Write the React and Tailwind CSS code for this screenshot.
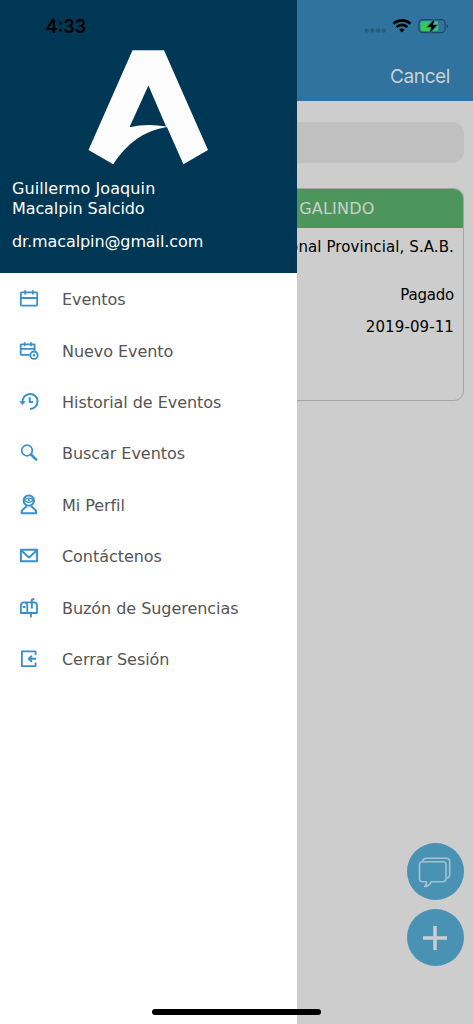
import React from "react";

function Icon({ children }) {
  return (
    <svg
      className="h-6 w-6 shrink-0"
      viewBox="0 0 24 24"
      fill="none"
      stroke="#3990ca"
      strokeWidth="1.8"
      strokeLinejoin="round"
    >
      {children}
    </svg>
  );
}

const items = [
  {
    label: "Eventos",
    icon: (
      <Icon>
        <rect x="3.8" y="5.4" width="16.4" height="13.2" rx="0.8" />
        <path d="M3.8 11h16.4M8.2 3.2v4.2M15.8 3.2v4.2" />
      </Icon>
    ),
  },
  {
    label: "Nuevo Evento",
    icon: (
      <Icon>
        <path d="M12.6 15.8H4.4a.7.7 0 0 1-.7-.7V6a.7.7 0 0 1 .7-.7h13.2V11.5M3.7 9.9h13.9M7.7 3.2v4M14 3.2v4" />
        <circle cx="17" cy="16.2" r="3.7" />
        <circle cx="17" cy="16.2" r="1.2" fill="#3990ca" stroke="none" />
      </Icon>
    ),
  },
  {
    label: "Historial de Eventos",
    icon: (
      <Icon>
        <path d="M5.6 12.2A7.5 7.5 0 1 1 13 18.9" strokeWidth="2" />
        <path d="M2.2 11.3h6.6l-3.3 3.8z" fill="#3990ca" stroke="none" />
        <path d="M12.7 7.2v4.8h3.4" strokeWidth="2" />
      </Icon>
    ),
  },
  {
    label: "Buscar Eventos",
    icon: (
      <Icon>
        <circle cx="10" cy="9.5" r="5.3" strokeWidth="1.7" />
        <path d="M14 13.5l5.2 5.1" strokeWidth="2.5" strokeLinecap="round" />
      </Icon>
    ),
  },
  {
    label: "Mi Perfil",
    icon: (
      <Icon>
        <circle cx="11.8" cy="7.6" r="5.2" strokeWidth="2" />
        <path d="M6.9 6.9q4.9-3.4 9.8 0M7.4 7.3q4.4 4 8.8 0" strokeWidth="1.2" />
        <circle cx="11.8" cy="7.1" r="1.1" fill="#3990ca" stroke="none" />
        <path d="M9.6 13.2L5.4 17q-.8.8-.8 2.1v1.2h14.6v-1.2q0-1.3-.8-2.1l-4.2-3.8" strokeWidth="2" />
      </Icon>
    ),
  },
  {
    label: "Contáctenos",
    icon: (
      <Icon>
        <rect x="3.9" y="5.8" width="16.2" height="11.5" strokeWidth="2" />
        <path d="M4.6 6.8L12 13.4l7.4-6.6" strokeWidth="2" />
      </Icon>
    ),
  },
  {
    label: "Buzón de Sugerencias",
    icon: (
      <Icon>
        <path d="M3.9 17V9.4a3 3 0 0 1 3-3h10.1a3 3 0 0 1 3 3V17zM10.3 17V9.4a3 3 0 0 0-3.1-3M5.8 11h2.7" />
        <path d="M14.8 12.4V4l2.4-1.3M13.9 17v4.2" strokeWidth="2" />
      </Icon>
    ),
  },
  {
    label: "Cerrar Sesión",
    icon: (
      <Icon>
        <path d="M18.6 8V4.3H4.9v14.8h13.7V15.5" />
        <path d="M18.9 11.8H11.9M14.9 8.8l-3.1 3 3.1 3" strokeWidth="2" />
      </Icon>
    ),
  },
];

function StatusIcons() {
  return (
    <svg className="h-[18px] w-[86px]" viewBox="0 0 86 18">
      <g fill="#255b80">
        <rect x="1.7" y="11.5" width="4" height="4" rx="1.3" />
        <rect x="7.4" y="11.5" width="4" height="4" rx="1.3" />
        <rect x="13.1" y="11.5" width="4" height="4" rx="1.3" />
        <rect x="18.8" y="11.5" width="4" height="4" rx="1.3" />
      </g>
      <g fill="none" stroke="#000" strokeWidth="2.6">
        <path d="M30.5 6.8a12.3 12.3 0 0 1 17 0" />
        <path d="M33.6 10.1a7.7 7.7 0 0 1 10.8 0" />
      </g>
      <path d="M36.2 12.8a3.8 3.8 0 0 1 5.4 0L38.9 15.6z" />
      <rect x="55.9" y="2.6" width="26.2" height="13" rx="3.6" fill="none" stroke="#1d4967" strokeWidth="1.2" />
      <path d="M83.6 7v4.4q1.4-.7 1.4-2.2t-1.4-2.2z" fill="#1d4967" />
      <rect x="57.5" y="4.2" width="17.8" height="9.8" rx="2" fill="#35ca5a" />
      <path d="M71.2 2.6L64.6 9.9h4.1L67 15.4l6.9-7.3h-4.1z" fill="#000" stroke="#30739f" strokeWidth="1.8" paintOrder="stroke" />
    </svg>
  );
}

function MainScreen() {
  return (
    <main className="flex h-full flex-col bg-[#cdcdcd]">
      <header className="flex h-[101px] items-end justify-end bg-[#30739f] pr-[23px] pb-[10px]">
        <button className="font-[Inter,sans-serif] text-[19px] leading-7 tracking-[-0.4px] text-[#cbd0d4]">
          Cancel
        </button>
      </header>
      <div className="mt-[21px] mr-[9.5px] ml-[10px] h-[41px] shrink-0 rounded-xl bg-[#c0c0c0]" />
      <section className="mt-[25px] mr-[9.5px] ml-[10px] h-[213px] shrink-0 overflow-hidden rounded-[10px] border border-[#a5a5a5]">
        <h2 className="-mx-px -mt-px flex h-[40px] items-center justify-end bg-[#4c965c] pt-px pr-[89px] text-[16px] tracking-[0.2px] text-[#cbd0cc]">
          GALINDO
        </h2>
        <div className="flex flex-col items-end pr-[8.5px] text-[15px] leading-[20px] text-black">
          <p className="mt-[9px] whitespace-nowrap tracking-[0.1px]">Nacional Provincial, S.A.B.</p>
          <p className="mt-[28px] tracking-[-0.2px]">Pagado</p>
          <p className="mt-[12px] tracking-[0.1px]">2019-09-11</p>
        </div>
      </section>
      <div className="mt-auto mr-[9.5px] mb-[58px] flex flex-col items-end gap-[9px]">
        <button className="flex h-[57px] w-[57px] items-center justify-center rounded-full bg-[#4a92b4]">
          <svg className="h-9 w-9" viewBox="0 0 36 36" fill="none" stroke="#a3c1cf" strokeWidth="1.6" strokeLinejoin="round">
            <path d="M5.5 7.8h20.5a3 3 0 0 1 3 3v14a3 3 0 0 1-3 3H14.2Q12.3 32 7.6 32.5q2.4-2 1.8-4.7H5.5a3 3 0 0 1-3-3v-14a3 3 0 0 1 3-3z" />
            <path d="M5.8 7.2q.4-3 3.3-3h20.4a3.2 3.2 0 0 1 3.2 3.2V21q0 2.6-3 3.2" />
          </svg>
        </button>
        <button className="flex h-[57px] w-[57px] items-center justify-center rounded-full bg-[#4a92b4]">
          <svg className="h-7 w-7" viewBox="0 0 28 28" stroke="#cdcdcd" strokeWidth="3.5">
            <path d="M14 2v24M2 14h24" />
          </svg>
        </button>
      </div>
    </main>
  );
}

function Drawer() {
  return (
    <aside className="absolute inset-y-0 left-0 flex w-[297px] flex-col bg-white">
      <header className="flex h-[273px] shrink-0 flex-col bg-[#003755] pl-3 text-[16px] leading-[20px] text-white">
        <svg className="mt-[50px] ml-[76px] h-[115px] w-[120px]" viewBox="0 0 120 115">
          <path
            fill="#fdfdfd"
            fillRule="evenodd"
            d="M44.5 .3H76L120 100 95.4 114.2 78.9 77Q46 82 25.2 114.2L.5 100zM60.4 35.4L41.5 77.2Q60 73.2 78.1 76.6z"
          />
        </svg>
        <p className="mt-[14px] tracking-[0.1px]">
          Guillermo Joaquin
          <br />
          <span className="tracking-[-0.1px]">Macalpin Salcido</span>
        </p>
        <p className="mt-[13px] tracking-[-0.1px]">dr.macalpin@gmail.com</p>
      </header>
      <nav className="flex flex-col pt-[0.6px]">
        {items.map((item) => (
          <a key={item.label} className="flex h-[51.4px] items-center gap-[21px] pl-[17px] text-[16px] tracking-[-0.05px] text-[#555]">
            {item.icon}
            <span className="pt-[2px]">{item.label}</span>
          </a>
        ))}
      </nav>
    </aside>
  );
}

export default function App() {
  return (
    <div className="relative h-[1024px] w-[473px] overflow-hidden font-['DejaVu_Sans',sans-serif]">
      <MainScreen />
      <Drawer />
      <div className="absolute inset-x-0 top-0 flex items-start justify-between pt-[17px] pr-[24px] pl-[45.5px]">
        <time className="font-[Inter,sans-serif] text-[18px] leading-5 font-semibold text-black">4:33</time>
        <StatusIcons />
      </div>
      <div className="absolute bottom-[9px] left-[152px] h-[6px] w-[169px] rounded-full bg-black" />
    </div>
  );
}
